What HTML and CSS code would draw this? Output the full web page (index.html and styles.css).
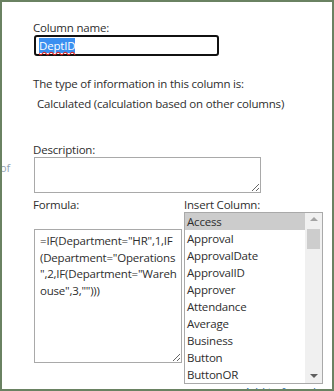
FILE: index.html
```html
<html lang="en">
<head>
    <title>Column Settings</title>
    <link rel="stylesheet" href="styles.css">
</head>
<body>
    <div class="window">
        <div class="gutter"><span class="clip">of</span></div>
        <div class="form">
            <div class="label">Column name:</div>
            <div class="name-box"><span class="sel">DeptID</span></div>

            <p class="info">The type of information in this column is:</p>
            <p class="info indent">Calculated (calculation based on other columns)</p>

            <div class="label desc-label">Description:</div>
            <textarea class="desc"></textarea>

            <div class="split">
                <div class="col-formula">
                    <div class="label">Formula:</div>
                    <textarea class="formula">=IF(Department="HR",1,IF
(Department="Operations
",2,IF(Department="Wareh
ouse",3,"")))</textarea>
                </div>
                <div class="col-insert">
                    <div class="label">Insert Column:</div>
                    <div class="listbox">
                        <ul class="items">
                            <li class="current">Access</li>
                            <li>Approval</li>
                            <li>ApprovalDate</li>
                            <li>ApprovalID</li>
                            <li>Approver</li>
                            <li>Attendance</li>
                            <li>Average</li>
                            <li>Business</li>
                            <li>Button</li>
                            <li>ButtonOR</li>
                        </ul>
                        <div class="scroll">
                            <span class="arrow up"></span>
                            <span class="thumb"></span>
                            <span class="arrow down"></span>
                        </div>
                    </div>
                </div>
            </div>
            <div class="add">Add to formula</div>
        </div>
    </div>
</body>
</html>
```

FILE: styles.css
```css
body {
    margin: 0;
    background: #6a8262;
    font-family: "Open Sans", "Noto Sans", sans-serif;
    font-size: 11.5px;
    letter-spacing: -0.2px;
    color: #2e2e2e;
}
.window {
    margin: 2px;
    width: 330px;
    height: 387px;
    background: #fff;
    overflow: hidden;
    display: flex;
}
.gutter {
    width: 31px;
    flex: none;
    overflow: hidden;
}
.clip {
    display: block;
    margin-top: 160px;
    margin-left: -2px;
    font-size: 11px;
    line-height: 12px;
    color: #93a3b3;
}
.form {
    flex: 1;
}
.label {
    line-height: 14px;
}
.form > .label:first-child {
    margin-top: 19px;
}
.name-box {
    box-sizing: border-box;
    margin-left: 1px;
    width: 185px;
    height: 21px;
    border: 2px solid #111;
    border-radius: 3px;
    padding: 2px 3px;
    line-height: 13px;
}
.sel {
    background: #3b8ff0;
    color: #fff;
    text-decoration: underline wavy #e02020;
    text-decoration-skip-ink: none;
    text-underline-offset: 1px;
}
.info {
    margin: 20px 0 0;
    line-height: 16px;
}
.indent {
    margin-top: 4px;
    padding-left: 4px;
}
.desc-label {
    margin-top: 31px;
}
textarea {
    display: block;
    box-sizing: border-box;
    margin: 0 0 0 1px;
    border: 1px solid #a9a9a9;
    font-family: inherit;
    font-size: 11.5px;
    letter-spacing: -0.2px;
    color: #2e2e2e;
    resize: both;
    outline: none;
}
.desc {
    width: 227px;
    height: 36px;
}
.split {
    display: flex;
    margin-top: 5px;
}
.col-formula {
    width: 151px;
}
.formula {
    margin-top: 17px;
    width: 148px;
    height: 134px;
    padding: 3px 5px;
    line-height: 16.7px;
    white-space: pre;
    overflow: hidden;
}
.col-insert {
    width: 139px;
}
.listbox {
    display: flex;
    box-sizing: border-box;
    width: 139px;
    height: 172px;
    border: 1px solid #a9a9a9;
}
.items {
    list-style: none;
    margin: 0;
    padding: 0;
    width: 120px;
}
.items li {
    height: 17px;
    line-height: 17px;
    padding-left: 2px;
}
.items .current {
    background: #cccccc;
}
.scroll {
    width: 17px;
    background: #f0f0f0;
    display: flex;
    flex-direction: column;
    align-items: center;
}
.arrow {
    width: 0;
    height: 0;
    border-left: 4px solid transparent;
    border-right: 4px solid transparent;
}
.up {
    margin-top: 4px;
    border-bottom: 4px solid #a3a3a3;
}
.thumb {
    margin-top: 8px;
    width: 13px;
    height: 20px;
    background: #cdcdcd;
}
.down {
    margin-top: auto;
    margin-bottom: 5px;
    border-top: 4px solid #5f5f5f;
}
.add {
    margin-top: 1px;
    padding-right: 10px;
    text-align: right;
    line-height: 14px;
    color: #2a6fb5;
}
```
